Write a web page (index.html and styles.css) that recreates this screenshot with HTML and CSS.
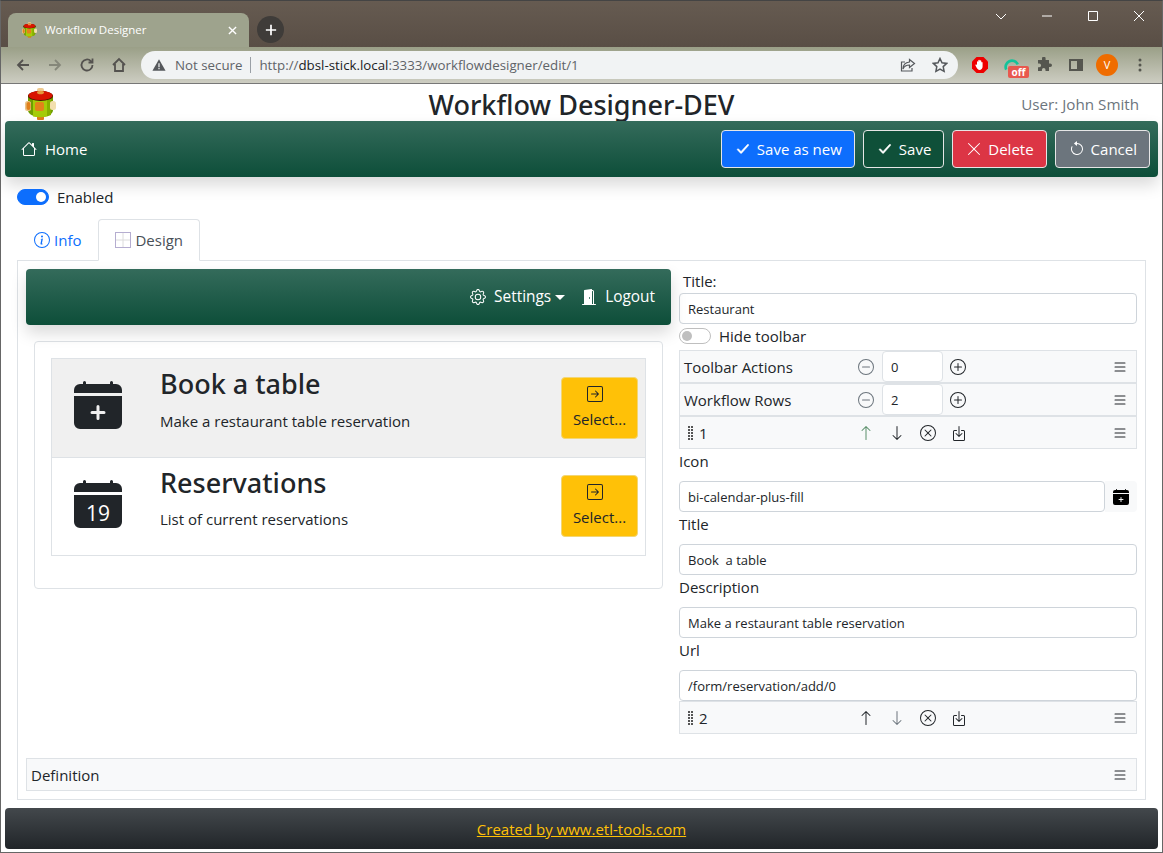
FILE: index.html

```html
<!DOCTYPE html>
<html lang="en">
<head>
  <meta charset="UTF-8" />
  <meta name="viewport" content="width=device-width, initial-scale=1.0">
  <title>Workflow Designer</title>
  <link rel="stylesheet" href="styles.css">
</head>
<body>
  <!-- icon sprite -->
  <svg class="sprite" xmlns="http://www.w3.org/2000/svg">
    <symbol id="i-house" viewBox="0 0 16 16"><path d="M8.707 1.5a1 1 0 0 0-1.414 0L.646 8.146a.5.5 0 0 0 .708.708L2 8.207V13.5A1.5 1.5 0 0 0 3.5 15h9a1.5 1.5 0 0 0 1.5-1.5V8.207l.646.647a.5.5 0 0 0 .708-.708L13 5.793V2.5a.5.5 0 0 0-.5-.5h-1a.5.5 0 0 0-.5.5v1.293L8.707 1.5ZM13 7.207V13.5a.5.5 0 0 1-.5.5h-9a.5.5 0 0 1-.5-.5V7.207l5-5 5 5Z"/></symbol>
    <symbol id="i-check" viewBox="0 0 16 16"><path stroke="currentColor" stroke-width=".5" d="M13.485 3.515a.75.75 0 0 1 .03 1.06l-6.9 7.6a.75.75 0 0 1-1.09.02L2.47 8.97a.75.75 0 0 1 1.06-1.06l2.5 2.5 6.39-6.86a.75.75 0 0 1 1.065-.035z"/></symbol>
    <symbol id="i-x" viewBox="0 0 16 16"><path d="M2.146 2.854a.5.5 0 1 1 .708-.708L8 7.293l5.146-5.147a.5.5 0 0 1 .708.708L8.707 8l5.147 5.146a.5.5 0 0 1-.708.708L8 8.707l-5.146 5.147a.5.5 0 0 1-.708-.708L7.293 8 2.146 2.854Z"/></symbol>
    <symbol id="i-undo" viewBox="0 0 16 16"><path d="M8 3a5 5 0 1 1-4.546 2.914.5.5 0 0 0-.908-.417A6 6 0 1 0 8 2v1z"/><path d="M8 4.466V.534a.25.25 0 0 0-.41-.192L5.23 2.308a.25.25 0 0 0 0 .384l2.36 1.966A.25.25 0 0 0 8 4.466z"/></symbol>
    <symbol id="i-info" viewBox="0 0 16 16"><path d="M8 15A7 7 0 1 1 8 1a7 7 0 0 1 0 14zm0 1A8 8 0 1 0 8 0a8 8 0 0 0 0 16z"/><path d="m8.93 6.588-2.29.287-.082.38.45.083c.294.07.352.176.288.469l-.738 3.468c-.194.897.105 1.319.808 1.319.545 0 1.178-.252 1.465-.598l.088-.416c-.2.176-.492.246-.686.246-.275 0-.375-.193-.304-.533L8.93 6.588zM9 4.5a1 1 0 1 1-2 0 1 1 0 0 1 2 0z"/></symbol>
    <symbol id="i-gear" viewBox="0 0 16 16"><path d="M8 4.754a3.246 3.246 0 1 0 0 6.492 3.246 3.246 0 0 0 0-6.492zM5.754 8a2.246 2.246 0 1 1 4.492 0 2.246 2.246 0 0 1-4.492 0z"/><path d="M9.796 1.343c-.527-1.79-3.065-1.79-3.592 0l-.094.319a.873.873 0 0 1-1.255.52l-.292-.16c-1.64-.892-3.433.902-2.54 2.541l.159.292a.873.873 0 0 1-.52 1.255l-.319.094c-1.79.527-1.79 3.065 0 3.592l.319.094a.873.873 0 0 1 .52 1.255l-.16.292c-.892 1.64.901 3.434 2.541 2.54l.292-.159a.873.873 0 0 1 1.255.52l.094.319c.527 1.79 3.065 1.79 3.592 0l.094-.319a.873.873 0 0 1 1.255-.52l.292.16c1.64.893 3.434-.902 2.54-2.541l-.159-.292a.873.873 0 0 1 .52-1.255l.319-.094c1.79-.527 1.79-3.065 0-3.592l-.319-.094a.873.873 0 0 1-.52-1.255l.16-.292c.893-1.64-.902-3.433-2.541-2.54l-.292.159a.873.873 0 0 1-1.255-.52l-.094-.319zm-2.633.283c.246-.835 1.428-.835 1.674 0l.094.319a1.873 1.873 0 0 0 2.693 1.115l.291-.16c.764-.415 1.6.42 1.184 1.185l-.159.292a1.873 1.873 0 0 0 1.116 2.692l.318.094c.835.246.835 1.428 0 1.674l-.319.094a1.873 1.873 0 0 0-1.115 2.693l.16.291c.415.764-.42 1.6-1.185 1.184l-.291-.159a1.873 1.873 0 0 0-2.693 1.116l-.094.318c-.246.835-1.428.835-1.674 0l-.094-.319a1.873 1.873 0 0 0-2.692-1.115l-.292.16c-.764.415-1.6-.42-1.184-1.185l.159-.291A1.873 1.873 0 0 0 1.945 8.93l-.319-.094c-.835-.246-.835-1.428 0-1.674l.319-.094A1.873 1.873 0 0 0 3.06 4.377l-.16-.292c-.415-.764.42-1.6 1.185-1.184l.292.159a1.873 1.873 0 0 0 2.692-1.115l.094-.319z"/></symbol>
    <symbol id="i-door" viewBox="0 0 16 16"><path d="M1.5 15a.5.5 0 0 0 0 1h13a.5.5 0 0 0 0-1H13V2.5A1.5 1.5 0 0 0 11.5 1H11V.5a.5.5 0 0 0-.57-.495l-7 1A.5.5 0 0 0 3 1.5V15H1.5zM11 2h.5a.5.5 0 0 1 .5.5V15h-1V2zm-2.5 8c-.276 0-.5-.448-.5-1s.224-1 .5-1 .5.448.5 1-.224 1-.5 1z"/></symbol>
    <symbol id="i-cal-plus" viewBox="0 0 16 16"><path d="M4 .5a.5.5 0 0 0-1 0V1H2a2 2 0 0 0-2 2v1h16V3a2 2 0 0 0-2-2h-1V.5a.5.5 0 0 0-1 0V1H4V.5zM16 14V5H0v9a2 2 0 0 0 2 2h12a2 2 0 0 0 2-2zM8.5 8.5V10H10a.5.5 0 0 1 0 1H8.5v1.5a.5.5 0 0 1-1 0V11H6a.5.5 0 0 1 0-1h1.5V8.5a.5.5 0 0 1 1 0z"/></symbol>
    <symbol id="i-select" viewBox="0 0 16 16"><path d="M15 2a1 1 0 0 0-1-1H2a1 1 0 0 0-1 1v12a1 1 0 0 0 1 1h12a1 1 0 0 0 1-1V2zM0 2a2 2 0 0 1 2-2h12a2 2 0 0 1 2 2v12a2 2 0 0 1-2 2H2a2 2 0 0 1-2-2V2zm4.5 5.5a.5.5 0 0 0 0 1h5.793l-2.147 2.146a.5.5 0 0 0 .708.708l3-3a.5.5 0 0 0 0-.708l-3-3a.5.5 0 1 0-.708.708L10.293 7.5H4.5z"/></symbol>
    <symbol id="i-minus" viewBox="0 0 16 16"><path d="M8 15A7 7 0 1 1 8 1a7 7 0 0 1 0 14zm0 1A8 8 0 1 0 8 0a8 8 0 0 0 0 16z"/><path d="M4 8a.5.5 0 0 1 .5-.5h7a.5.5 0 0 1 0 1h-7A.5.5 0 0 1 4 8z"/></symbol>
    <symbol id="i-plus" viewBox="0 0 16 16"><path d="M8 15A7 7 0 1 1 8 1a7 7 0 0 1 0 14zm0 1A8 8 0 1 0 8 0a8 8 0 0 0 0 16z"/><path d="M8 4a.5.5 0 0 1 .5.5v3h3a.5.5 0 0 1 0 1h-3v3a.5.5 0 0 1-1 0v-3h-3a.5.5 0 0 1 0-1h3v-3A.5.5 0 0 1 8 4z"/></symbol>
    <symbol id="i-xcircle" viewBox="0 0 16 16"><path d="M8 15A7 7 0 1 1 8 1a7 7 0 0 1 0 14zm0 1A8 8 0 1 0 8 0a8 8 0 0 0 0 16z"/><path d="M4.646 4.646a.5.5 0 0 1 .708 0L8 7.293l2.646-2.647a.5.5 0 0 1 .708.708L8.707 8l2.647 2.646a.5.5 0 0 1-.708.708L8 8.707l-2.646 2.647a.5.5 0 0 1-.708-.708L7.293 8 4.646 5.354a.5.5 0 0 1 0-.708z"/></symbol>
    <symbol id="i-up" viewBox="0 0 16 16"><path d="M8 15a.5.5 0 0 0 .5-.5V2.707l3.146 3.147a.5.5 0 0 0 .708-.708l-4-4a.5.5 0 0 0-.708 0l-4 4a.5.5 0 1 0 .708.708L7.5 2.707V14.5a.5.5 0 0 0 .5.5z"/></symbol>
    <symbol id="i-down" viewBox="0 0 16 16"><path d="M8 1a.5.5 0 0 1 .5.5v11.793l3.146-3.147a.5.5 0 0 1 .708.708l-4 4a.5.5 0 0 1-.708 0l-4-4a.5.5 0 0 1 .708-.708L7.5 13.293V1.5A.5.5 0 0 1 8 1z"/></symbol>
    <symbol id="i-list" viewBox="0 0 16 16"><path d="M2.5 12a.5.5 0 0 1 .5-.5h10a.5.5 0 0 1 0 1H3a.5.5 0 0 1-.5-.5zm0-4a.5.5 0 0 1 .5-.5h10a.5.5 0 0 1 0 1H3a.5.5 0 0 1-.5-.5zm0-4a.5.5 0 0 1 .5-.5h10a.5.5 0 0 1 0 1H3a.5.5 0 0 1-.5-.5z"/></symbol>
    <symbol id="i-box" viewBox="0 0 16 16"><path d="M3.5 6a.5.5 0 0 0-.5.5v8a.5.5 0 0 0 .5.5h9a.5.5 0 0 0 .5-.5v-8a.5.5 0 0 0-.5-.5h-2a.5.5 0 0 1 0-1h2A1.5 1.5 0 0 1 14 6.5v8a1.5 1.5 0 0 1-1.5 1.5h-9A1.5 1.5 0 0 1 2 14.5v-8A1.5 1.5 0 0 1 3.5 5h2a.5.5 0 0 1 0 1h-2z"/><path d="M7.646 11.854a.5.5 0 0 0 .708 0l3-3a.5.5 0 0 0-.708-.708L8.5 10.293V1.5a.5.5 0 0 0-1 0v8.793L5.354 8.146a.5.5 0 1 0-.708.708l3 3z"/></symbol>
    <symbol id="i-grip" viewBox="0 0 6 16"><path d="M0 1h2v2H0zM3 1h2v2H3zM0 4h2v2H0zM3 4h2v2H3zM0 7h2v2H0zM3 7h2v2H3zM0 10h2v2H0zM3 10h2v2H3zM0 13h2v2H0zM3 13h2v2H3z"/></symbol>
    <symbol id="i-logo" viewBox="0 0 31 32">
      <rect x="12" y="0" width="7" height="6" rx="2" fill="#eec98f"/>
      <rect x="12" y="26" width="7" height="6" rx="1" fill="#e07d18"/>
      <path d="M3 7v15c0 4 5 7 12.500 7S28 26 28 22V7z" fill="#6f9e00"/>
      <path d="M8 10h14v18.500q-7 1.500-14 0z" fill="#a5cc08"/>
      <path d="M22 10h4v17l-4 1.500z" fill="#86b000"/>
      <rect x="0" y="13" width="6" height="10" rx="2.500" fill="#e9c489"/>
      <rect x="1.500" y="14" width="4" height="8" rx="2" fill="#e0801c"/>
      <rect x="25" y="13" width="6" height="9" rx="2.500" fill="#f2dfae"/>
      <rect x="10" y="14" width="9" height="9" rx="2" fill="#e2831a"/>
      <ellipse cx="15.500" cy="8" rx="12.500" ry="5" fill="#4a1500"/>
      <ellipse cx="15.500" cy="7.500" rx="12" ry="4.500" fill="#d81400"/>
      <ellipse cx="15.500" cy="4.500" rx="3.500" ry="1.800" fill="#e59a3c"/>
    </symbol>
  </svg>

  <div class="window">
    <!-- browser frame -->
    <div class="tabstrip">
      <div class="browser-tab">
        <svg class="favicon"><use href="#i-logo"/></svg>
        <span class="browser-tab-title">Workflow Designer</span>
        <svg class="browser-tab-close" viewBox="0 0 10 10"><path d="M1 1l8 8M9 1l-8 8"/></svg>
      </div>
      <div class="newtab">
        <svg viewBox="0 0 14 14"><path d="M7 1v12M1 7h12"/></svg>
      </div>
      <div class="winctl">
        <svg viewBox="0 0 12 12"><path d="M1 4l5 5 5-5"/></svg>
        <svg viewBox="0 0 12 12"><path d="M1 6h10"/></svg>
        <svg viewBox="0 0 12 12"><path d="M1.5 1.5h9v9h-9z"/></svg>
        <svg viewBox="0 0 12 12"><path d="M1 1l10 10M11 1L1 11"/></svg>
      </div>
    </div>
    <div class="toolbar">
      <div class="tb-nav">
        <svg viewBox="0 0 16 16"><path d="M14 8H3M8 3L3 8l5 5"/></svg>
        <svg class="tb-off" viewBox="0 0 16 16"><path d="M2 8h11M8 3l5 5-5 5"/></svg>
        <svg viewBox="0 0 16 16"><path d="M13.5 8a5.5 5.5 0 1 1-1.6-3.9L13.5 5.5M13.5 1.5v4h-4"/></svg>
        <svg viewBox="0 0 16 16"><path d="M2 8l6-6 6 6M4 7v7h8V7"/></svg>
      </div>
      <div class="omnibox">
        <svg class="omni-warn" viewBox="0 0 16 16"><path d="M8 1.5L15.5 14.5H.5z"/><path class="omni-bang" d="M7.3 6h1.4v4.6H7.3zM7.3 11.4h1.4v1.4H7.3z"/></svg>
        <span class="omni-secure">Not secure</span>
        <span class="omni-sep"></span>
        <span class="omni-url">http://<b>dbsl-stick.local</b>:3333/workflowdesigner/edit/1</span>
        <svg class="omni-share" viewBox="0 0 16 16"><path d="M9.5 2.5l5 4-5 4V8C6 8 4 9.500 3 12c0-4 2-6.500 6.500-7zM12 11v3H1.500V5H5"/></svg>
        <svg class="omni-star" viewBox="0 0 16 16"><path d="M8 1.500l2 4.300 4.700.6-3.500 3.200.9 4.700L8 12l-4.100 2.300.9-4.700L1.300 6.400 6 5.800z"/></svg>
      </div>
      <div class="tb-ext">
        <svg class="ext-stop-icon" viewBox="0 0 18 18"><path class="ext-stop" d="M5.500 1h7L17 5.500v7L12.500 17h-7L1 12.500v-7z"/><path class="ext-hand" d="M6 9V6c0-1 1.300-1 1.300 0V4.500c0-1 1.500-1 1.500 0v.5c0-1 1.500-1 1.500 0v1.500c0-.8 1.300-.8 1.300 0v4c0 2-1.500 3.500-3 3.500S6.500 13 5.500 11.500L4.500 9.500c-.4-.8.6-1.300 1.500-.5z"/></svg>
        <div class="ext-gram">
          <svg viewBox="0 0 18 18"><path d="M15.500 6A7 7 0 1 0 2.500 12"/></svg>
          <span class="ext-off">off</span>
        </div>
        <svg viewBox="0 0 16 16"><path class="ext-fill" d="M6 1.500a1.800 1.800 0 0 1 3.600 0V3H13v3.500h1.200a1.800 1.800 0 0 1 0 3.600H13V14H9.500v-1.300a1.800 1.800 0 0 0-3.600 0V14H2v-3.800h1.300a1.800 1.800 0 0 0 0-3.600H2V3h4z"/></svg>
        <svg viewBox="0 0 16 16"><path class="ext-fill" d="M1 2h14v12H1zM3 4v8h6V4z"/></svg>
        <span class="avatar">V</span>
        <svg viewBox="0 0 16 16"><path class="ext-fill" d="M8 1.500a1.500 1.500 0 1 1 0 3 1.500 1.500 0 0 1 0-3zM8 6.500a1.500 1.500 0 1 1 0 3 1.500 1.500 0 0 1 0-3zM8 11.500a1.500 1.500 0 1 1 0 3 1.500 1.500 0 0 1 0-3z"/></svg>
      </div>
    </div>

    <!-- page -->
    <div class="page">
      <header class="page-head">
        <svg class="page-logo"><use href="#i-logo"/></svg>
        <h1>Workflow Designer-DEV</h1>
        <span class="page-user">User: John Smith</span>
      </header>

      <nav class="navbar main-nav">
        <a class="nav-link"><svg class="ic"><use href="#i-house"/></svg>Home</a>
        <div class="nav-actions">
          <button class="btn btn-blue"><svg class="ic"><use href="#i-check"/></svg>Save as new</button>
          <button class="btn btn-green"><svg class="ic"><use href="#i-check"/></svg>Save</button>
          <button class="btn btn-red"><svg class="ic"><use href="#i-x"/></svg>Delete</button>
          <button class="btn btn-gray"><svg class="ic"><use href="#i-undo"/></svg>Cancel</button>
        </div>
      </nav>

      <div class="switch-row enabled-row">
        <span class="switch on"></span>
        <span>Enabled</span>
      </div>

      <ul class="tabs">
        <li class="tab tab-info"><svg class="ic"><use href="#i-info"/></svg>Info</li>
        <li class="tab active">
          <svg class="ic" viewBox="0 0 16 16"><path class="grid-in" d="M8 1v14M1 8h14"/><path class="grid-out" d="M.5.500h15v15H.500z"/></svg>Design
        </li>
      </ul>

      <div class="tab-content">
        <div class="columns">
          <div class="left-col">
            <nav class="navbar sub-nav">
              <a class="nav-link"><svg class="ic"><use href="#i-gear"/></svg>Settings<span class="caret"></span></a>
              <a class="nav-link"><svg class="ic"><use href="#i-door"/></svg>Logout</a>
            </nav>
            <div class="card">
              <div class="wf-list">
                <div class="wf-item current">
                  <svg class="wf-icon"><use href="#i-cal-plus"/></svg>
                  <div class="wf-text">
                    <h3>Book a table</h3>
                    <p>Make a restaurant table reservation</p>
                  </div>
                  <button class="btn-select"><svg class="ic"><use href="#i-select"/></svg>Select...</button>
                </div>
                <div class="wf-item">
                  <svg class="wf-icon" viewBox="0 0 16 16">
                    <path d="M4 .5a.5.5 0 0 0-1 0V1H2a2 2 0 0 0-2 2v1h16V3a2 2 0 0 0-2-2h-1V.5a.5.5 0 0 0-1 0V1H4V.5zM16 14V5H0v9a2 2 0 0 0 2 2h12a2 2 0 0 0 2-2z"/>
                    <text class="wf-date" x="8" y="13.500">19</text>
                  </svg>
                  <div class="wf-text">
                    <h3>Reservations</h3>
                    <p>List of current reservations</p>
                  </div>
                  <button class="btn-select"><svg class="ic"><use href="#i-select"/></svg>Select...</button>
                </div>
              </div>
            </div>
          </div>

          <div class="right-col">
            <label class="title-label">Title:</label>
            <input class="field" value="Restaurant">
            <div class="switch-row hide-row">
              <span class="switch"></span>
              <span>Hide toolbar</span>
            </div>

            <div class="panel">
              <span class="panel-name">Toolbar Actions</span>
              <svg class="ic muted"><use href="#i-minus"/></svg>
              <input class="num" value="0">
              <svg class="ic"><use href="#i-plus"/></svg>
              <svg class="ic panel-menu"><use href="#i-list"/></svg>
            </div>
            <div class="panel">
              <span class="panel-name">Workflow Rows</span>
              <svg class="ic muted"><use href="#i-minus"/></svg>
              <input class="num" value="2">
              <svg class="ic"><use href="#i-plus"/></svg>
              <svg class="ic panel-menu"><use href="#i-list"/></svg>
            </div>
            <div class="panel">
              <span class="panel-name row-name"><svg class="grip"><use href="#i-grip"/></svg>1</span>
              <div class="row-actions">
                <svg class="ic up-off"><use href="#i-up"/></svg>
                <svg class="ic"><use href="#i-down"/></svg>
                <svg class="ic"><use href="#i-xcircle"/></svg>
                <svg class="ic"><use href="#i-box"/></svg>
              </div>
              <svg class="ic panel-menu"><use href="#i-list"/></svg>
            </div>

            <label class="row-label">Icon</label>
            <div class="icon-field">
              <input class="field" value="bi-calendar-plus-fill">
              <span class="icon-addon"><svg class="ic"><use href="#i-cal-plus"/></svg></span>
            </div>
            <label class="row-label">Title</label>
            <input class="field" value="Book  a table">
            <label class="row-label">Description</label>
            <input class="field" value="Make a restaurant table reservation">
            <label class="row-label">Url</label>
            <input class="field" value="/form/reservation/add/0">

            <div class="panel">
              <span class="panel-name row-name"><svg class="grip"><use href="#i-grip"/></svg>2</span>
              <div class="row-actions">
                <svg class="ic"><use href="#i-up"/></svg>
                <svg class="ic down-off"><use href="#i-down"/></svg>
                <svg class="ic"><use href="#i-xcircle"/></svg>
                <svg class="ic"><use href="#i-box"/></svg>
              </div>
              <svg class="ic panel-menu"><use href="#i-list"/></svg>
            </div>
          </div>
        </div>

        <div class="panel definition">
          <span>Definition</span>
          <svg class="ic panel-menu"><use href="#i-list"/></svg>
        </div>
      </div>

      <footer class="page-foot">
        <a href="#">Created by www.etl-tools.com</a>
      </footer>
    </div>
  </div>
</body>
</html>
```

FILE: styles.css

```css
* {
  box-sizing: border-box;
}
body {
  margin: 0;
  font-family: "Open Sans", "Noto Sans", sans-serif;
  font-size: 15px;
  line-height: 24px;
  color: #212529;
  background: #fff;
}
.sprite {
  display: none;
}
.ic {
  width: 16px;
  height: 16px;
  fill: currentColor;
  flex: none;
}
.window {
  width: 1163px;
  height: 853px;
  border: 1px solid #666;
  border-top-color: #444;
  overflow: hidden;
}

/* browser frame */
.tabstrip {
  height: 46px;
  display: flex;
  align-items: flex-end;
  padding-left: 7px;
  background: linear-gradient(#665b51, #594e45);
}
.browser-tab {
  width: 241px;
  height: 34px;
  display: flex;
  align-items: center;
  padding: 0 10px 0 14px;
  background: #9ea38d;
  border-radius: 8px 8px 0 0;
  color: #fff;
  font-size: 11.5px;
}
.favicon {
  width: 15px;
  height: 16px;
}
.browser-tab-title {
  margin-left: 8px;
  flex: 1;
}
.browser-tab-close {
  width: 9px;
  height: 9px;
  margin-right: 2px;
  fill: none;
  stroke: #fff;
  stroke-width: 1.500;
}
.newtab {
  width: 27px;
  height: 27px;
  margin: 0 0 4px 8px;
  border-radius: 50%;
  background: #3f3c39;
  display: flex;
  align-items: center;
  justify-content: center;
}
.newtab svg {
  width: 12px;
  height: 12px;
  fill: none;
  stroke: #fff;
  stroke-width: 2;
}
.winctl {
  margin-left: auto;
  align-self: flex-start;
  display: flex;
  gap: 34px;
  padding: 9px 17px 0 0;
}
.winctl svg {
  width: 12px;
  height: 12px;
  fill: none;
  stroke: #fff;
  stroke-width: 1;
}
.toolbar {
  height: 37px;
  display: flex;
  align-items: center;
  background: linear-gradient(#9a9f87, #cdcdc2);
  border-bottom: 1px solid #777;
}
.tb-nav {
  width: 140px;
  display: flex;
  gap: 16px;
  padding-left: 14px;
}
.tb-nav svg {
  width: 16px;
  height: 16px;
  fill: none;
  stroke: #54524f;
  stroke-width: 1.800;
}
.tb-nav .tb-off {
  stroke: #85877a;
}
.omnibox {
  width: 817px;
  height: 28px;
  display: flex;
  align-items: center;
  padding: 0 10px 0 11px;
  border-radius: 14px;
  background: #f1f3f4;
  color: #5f6368;
  font-size: 13.300px;
}
.omni-warn {
  width: 14px;
  height: 14px;
  fill: #55585c;
}
.omni-bang {
  fill: #f1f3f4;
}
.omni-secure {
  margin-left: 9px;
}
.omni-sep {
  width: 1px;
  height: 16px;
  margin: 0 8px;
  background: #9aa0a6;
}
.omni-url b {
  font-weight: 400;
  color: #202124;
}
.omni-share, .omni-star {
  width: 16px;
  height: 16px;
  fill: none;
  stroke: #55585c;
  stroke-width: 1.200;
}
.omni-share {
  margin-left: auto;
}
.omni-star {
  margin-left: 16px;
  stroke-width: 1.500;
}
.tb-ext {
  flex: 1;
  display: flex;
  align-items: center;
  padding-left: 13px;
}
.tb-ext > svg {
  width: 16px;
  height: 16px;
  flex: none;
}
.tb-ext > svg.ext-stop-icon {
  width: 18px;
  height: 18px;
}
.tb-ext > :nth-child(2) { margin-left: 15px; }
.tb-ext > :nth-child(3) { margin-left: 16px; }
.tb-ext > :nth-child(4) { margin-left: 16px; }
.tb-ext > :nth-child(5) { margin-left: 12px; }
.tb-ext > :nth-child(6) { margin-left: 14px; }
.ext-stop {
  fill: #e00;
}
.ext-hand {
  fill: #fff;
}
.ext-fill {
  fill: #55564f;
  fill-rule: evenodd;
}
.ext-gram {
  position: relative;
  width: 16px;
  height: 16px;
}
.ext-gram svg {
  width: 16px;
  height: 16px;
  fill: none;
  stroke: #15c39a;
  stroke-width: 3;
}
.ext-off {
  position: absolute;
  left: 4px;
  top: 9px;
  width: 21px;
  height: 12px;
  border-radius: 2px;
  background: #e8584e;
  color: #fff;
  font-size: 10px;
  font-weight: 700;
  line-height: 12px;
  text-align: center;
}
.avatar {
  width: 22px;
  height: 22px;
  border-radius: 50%;
  background: #ef6c00;
  color: #fff;
  font-size: 11px;
  line-height: 22px;
  text-align: center;
  flex: none;
}

/* page */
.page {
  padding: 0 4px;
}
.page-head {
  height: 37px;
  display: grid;
  grid-template-columns: 1fr auto 1fr;
  align-items: center;
}
.page-logo {
  width: 31px;
  height: 32px;
  margin: 3px 0 0 20px;
}
h1 {
  margin: 4px 0 0;
  font-family: "Noto Sans", "Open Sans", sans-serif;
  font-size: 27px;
  font-weight: 500;
  line-height: 32px;
}
.page-user {
  justify-self: end;
  margin: 2px 19px 0 0;
  color: #6c757d;
  font-size: 15.200px;
}
.navbar {
  position: relative;
  height: 56px;
  display: flex;
  align-items: center;
  border-radius: 4px;
  background: linear-gradient(#346b5b, #0d4e39);
  box-shadow: 0 8px 16px rgba(0,0,0,.15);
}
.main-nav {
  justify-content: space-between;
  padding: 0 8px 0 16px;
}
.nav-link {
  display: flex;
  align-items: center;
  gap: 8px;
  color: #fff;
}
.nav-actions {
  display: flex;
  gap: 8px;
}
.btn {
  height: 38px;
  display: flex;
  align-items: center;
  gap: 6px;
  padding: 0 12px 0 13px;
  border: 1px solid #e6e6e6;
  border-radius: 4px;
  color: #fff;
  font: inherit;
}
.btn-blue { background: #0d6efd; }
.btn-green { background: #0f5039; }
.btn-red { background: #dc3545; }
.btn-gray { background: #6c757d; }

.switch-row {
  display: flex;
  align-items: center;
  gap: 8px;
}
.switch {
  position: relative;
  width: 32px;
  height: 16px;
  border: 1px solid #bfbfbf;
  border-radius: 8px;
  background: #fff;
}
.switch::after {
  content: "";
  position: absolute;
  left: 2px;
  top: 2px;
  width: 10px;
  height: 10px;
  border-radius: 50%;
  background: #bfbfbf;
}
.switch.on {
  border-color: #0d6efd;
  background: #0d6efd;
}
.switch.on::after {
  left: auto;
  right: 2px;
  background: #fff;
}
.enabled-row {
  margin: 8px 0 10px 12px;
}

.tabs {
  position: relative;
  z-index: 1;
  display: flex;
  margin: 0 0 -1px 12px;
  padding: 0;
  list-style: none;
}
.tab {
  height: 42px;
  display: flex;
  align-items: center;
  gap: 4px;
  padding: 0 16px;
  border: 1px solid transparent;
  border-radius: 4px 4px 0 0;
}
.tab-info {
  color: #0d6efd;
}
.tab.active {
  color: #495057;
  background: #fff;
  border-color: #dee2e6 #dee2e6 #fff;
}
.grid-in {
  fill: none;
  stroke: #dcdcdc;
}
.grid-out {
  fill: none;
  stroke: #6a5aa0;
  stroke-dasharray: 1 1;
}
.tab-content {
  margin: 0 12px 0 12px;
  height: 540px;
  padding: 8px;
  border: 1px solid #dee2e6;
}
.columns {
  display: flex;
  gap: 8px;
}
.left-col {
  width: 645px;
  flex: none;
}
.sub-nav {
  justify-content: flex-end;
  gap: 16px;
  padding-right: 16px;
  font-size: 15.400px;
}
.caret {
  width: 0;
  height: 0;
  margin-left: -4px;
  border: 5px solid transparent;
  border-top-color: #fff;
  border-bottom: 0;
}
.card {
  height: 248px;
  margin: 16px 8px 0;
  padding: 16px;
  border: 1px solid #dee2e6;
  border-radius: 4px;
}
.wf-list {
  border: 1px solid #dee2e6;
}
.wf-item {
  height: 98px;
  display: flex;
  align-items: flex-start;
  padding: 0 7px 0 22px;
}
.wf-item + .wf-item {
  border-top: 1px solid #dee2e6;
  height: 98px;
}
.wf-item.current {
  background: #f0f0f0;
}
.wf-icon {
  width: 48px;
  height: 48px;
  margin-top: 22px;
  fill: #212529;
  flex: none;
}
.wf-date {
  fill: #fff;
  font-size: 7px;
  text-anchor: middle;
}
.wf-text {
  flex: 1;
  margin: 9px 0 0 39px;
}
h3 {
  margin: -2px 0 0 -1px;
  font-family: "Noto Sans", "Open Sans", sans-serif;
  font-size: 27px;
  font-weight: 500;
  line-height: 36px;
}
.wf-text p {
  margin: 7px 0 0 -1px;
}
.wf-item + .wf-item .wf-text p {
  margin-top: 6px;
}
.btn-select {
  width: 77px;
  height: 62px;
  margin-top: 18px;
  padding: 0;
  border: 1px solid #f2d675;
  border-radius: 4px;
  background: #ffc107;
  color: #212529;
  font: inherit;
}
.wf-item + .wf-item .btn-select {
  margin-top: 17px;
}
.btn-select .ic {
  display: block;
  margin: 0 0 5px 25px;
}

.right-col {
  width: 458px;
  flex: none;
}
label {
  display: block;
  height: 24px;
}
.title-label {
  padding-left: 4px;
}
.row-label {
  height: 32px;
}
.field {
  display: block;
  width: 100%;
  height: 31px;
  padding: 0 8px;
  border: 1px solid #ced4da;
  border-radius: 4px;
  color: #212529;
  font: 13px "Open Sans", "Noto Sans", sans-serif;
}
.hide-row {
  height: 26px;
  padding-bottom: 2px;
}
.panel {
  height: 33px;
  display: flex;
  align-items: center;
  padding: 0 8px 0 4px;
  background: #f8f9fa;
  border: 1px solid #dee2e6;
}
.panel-name {
  width: 174px;
  flex: none;
}
.row-name {
  display: flex;
  align-items: center;
  gap: 5px;
  padding-left: 4px;
}
.grip {
  width: 6px;
  height: 16px;
  fill: #555;
}
.num {
  width: 61px;
  height: 31px;
  margin: 0 7px 0 8px;
  padding: 0 8px;
  border: 1px solid #dee2e6;
  border-radius: 4px;
  color: #212529;
  font: 13px "Open Sans", "Noto Sans", sans-serif;
}
.muted {
  color: #6c757d;
}
.panel-menu {
  margin-left: auto;
}
.row-actions {
  display: flex;
  gap: 15px;
}
.up-off {
  color: #5a8f6a;
}
.down-off {
  color: #6c757d;
}
.icon-field {
  display: flex;
}
.icon-addon {
  width: 32px;
  height: 31px;
  flex: none;
  display: flex;
  align-items: center;
  justify-content: center;
  border-radius: 0 4px 4px 0;
  background: #f8f9fa;
  color: #000;
}
.definition {
  margin-top: 24px;
}
.page-foot {
  height: 41px;
  margin-top: 8px;
  display: flex;
  align-items: center;
  justify-content: center;
  border-radius: 4px;
  background: linear-gradient(#43484c, #212529);
}
.page-foot a {
  color: #ffc107;
}
```
